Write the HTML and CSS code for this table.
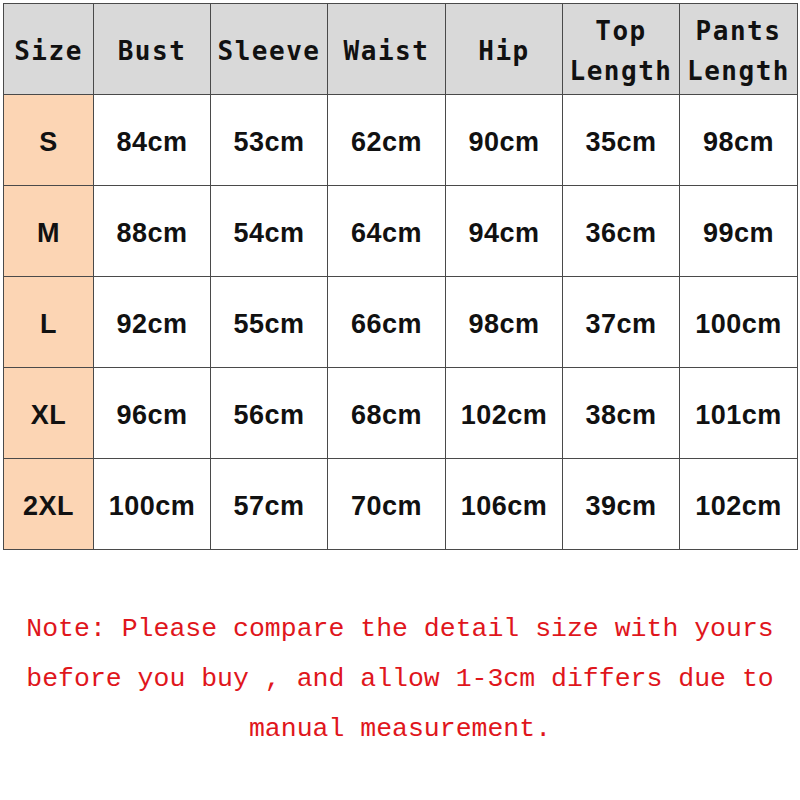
FILE: index.html
```html
<!DOCTYPE html>
<html>
<head>
<meta charset="utf-8">
<link rel="stylesheet" href="styles.css">
</head>
<body>
<div class="page">
  <table class="sizes">
    <colgroup>
      <col class="c-size"><col class="c-a"><col class="c-a"><col class="c-b"><col class="c-a"><col class="c-a"><col class="c-b">
    </colgroup>
    <thead>
      <tr>
        <th>Size</th><th>Bust</th><th>Sleeve</th><th>Waist</th><th>Hip</th><th>Top<br>Length</th><th>Pants<br>Length</th>
      </tr>
    </thead>
    <tbody>
      <tr><td class="sz">S</td><td>84cm</td><td>53cm</td><td>62cm</td><td>90cm</td><td>35cm</td><td>98cm</td></tr>
      <tr><td class="sz">M</td><td>88cm</td><td>54cm</td><td>64cm</td><td>94cm</td><td>36cm</td><td>99cm</td></tr>
      <tr><td class="sz">L</td><td>92cm</td><td>55cm</td><td>66cm</td><td>98cm</td><td>37cm</td><td>100cm</td></tr>
      <tr><td class="sz">XL</td><td>96cm</td><td>56cm</td><td>68cm</td><td>102cm</td><td>38cm</td><td>101cm</td></tr>
      <tr><td class="sz">2XL</td><td>100cm</td><td>57cm</td><td>70cm</td><td>106cm</td><td>39cm</td><td>102cm</td></tr>
    </tbody>
  </table>
  <p class="note">Note: Please compare the detail size with yours<br>before you buy , and allow 1-3cm differs due to<br>manual measurement.</p>
</div>
</body>
</html>
```

FILE: styles.css
```css
html, body {
  margin: 0;
  padding: 0;
  background: #ffffff;
}
.page {
  width: 800px;
  padding: 3px 0 0 3px;
  box-sizing: border-box;
}
.sizes {
  border-collapse: collapse;
  table-layout: fixed;
  width: 795px;
}
.c-size { width: 90px; }
.c-a { width: 117px; }
.c-b { width: 118px; }
.sizes th, .sizes td {
  border: 1.5px solid #4a4a4a;
  text-align: center;
  vertical-align: middle;
  padding: 4px 0 0 0;
  color: #111;
}
.sizes th {
  height: 86px;
  background: #d9d9d9;
  font-family: "DejaVu Sans Mono", monospace;
  font-weight: bold;
  font-size: 26px;
  letter-spacing: 1.5px;
  line-height: 40px;
}
.sizes td {
  height: 86px;
  background: #ffffff;
  font-family: "Liberation Sans", Arial, sans-serif;
  font-weight: bold;
  font-size: 27px;
  letter-spacing: 0.5px;
}
.sizes td.sz {
  background: #fcd5b4;
}
.note {
  margin: 54px 0 0 -3px;
  text-align: center;
  color: #e0161c;
  font-family: "Liberation Mono", "Courier New", monospace;
  font-size: 26.5px;
  line-height: 50px;
}
```
